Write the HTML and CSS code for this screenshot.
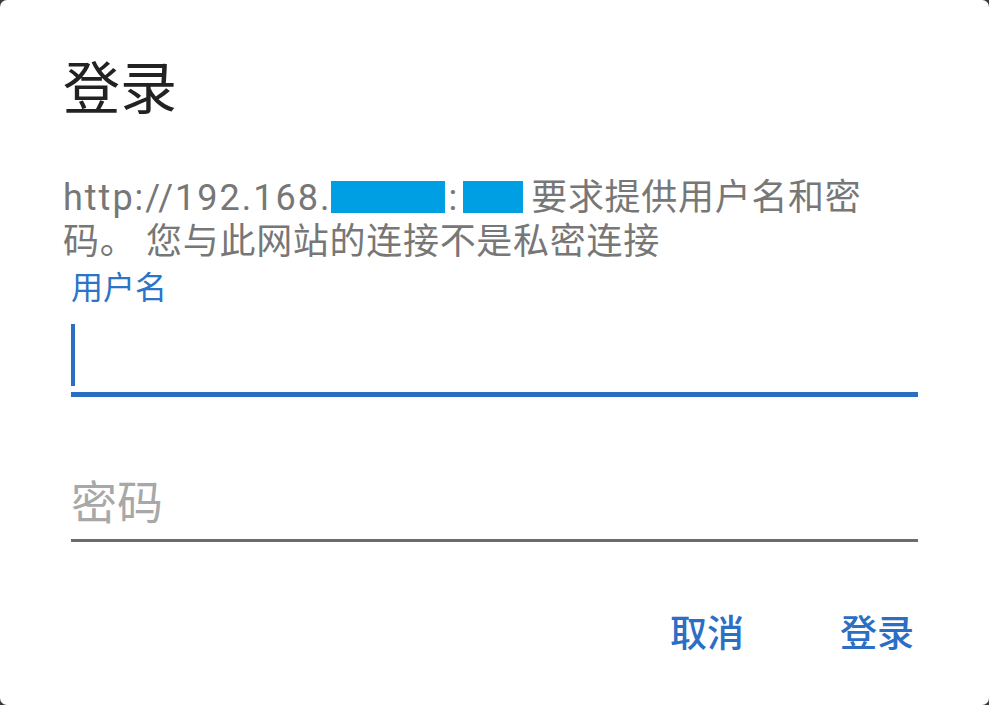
FILE: index.html
```html
<!DOCTYPE html>
<html lang="zh-CN">
<head>
<meta charset="utf-8">
<link rel="stylesheet" href="styles.css">
</head>
<body>
<div class="dialog">
  <h1 class="title">登录</h1>
  <p class="message"><span class="latin">http://192.168.</span><span class="redact redact-ip"></span><span class="latin colon">:</span><span class="redact redact-port"></span>要求提供用户名和密码。 您与此网站的连接不是私密连接</p>
  <div class="field field-active">
    <label class="field-label">用户名</label>
    <div class="field-input"><span class="caret"></span></div>
  </div>
  <div class="field field-idle">
    <div class="field-input"><span class="placeholder">密码</span></div>
  </div>
  <div class="actions">
    <button class="btn">取消</button>
    <button class="btn">登录</button>
  </div>
</div>
</body>
</html>
```
FILE: styles.css
```css
html, body {
  margin: 0;
  padding: 0;
  background: #3a3a3a;
}
body {
  width: 989px;
  height: 705px;
  overflow: hidden;
  font-family: Roboto, "Noto Sans CJK SC", sans-serif;
}
.dialog {
  box-sizing: border-box;
  width: 989px;
  height: 705px;
  background: #ffffff;
  border-radius: 7px;
  padding: 56px 71px 0 63px;
  display: flex;
  flex-direction: column;
}
.title {
  margin: 0;
  font-family: "Noto Sans CJK SC", sans-serif;
  font-weight: 400;
  font-size: 57px;
  line-height: 56px;
  color: #222222;
}
.message {
  margin: 64px 0 0 0;
  width: 830px;
  font-size: 36px;
  line-height: 44px;
  letter-spacing: 0.7px;
  color: #777777;
}
.latin {
  letter-spacing: 2px;
}
.colon {
  margin-left: 3px;
}
.redact {
  display: inline-block;
  background: #009fe4;
  height: 32px;
  vertical-align: -3px;
}
.redact-ip { width: 114px; }
.redact-port { width: 60px; margin-left: 4px; margin-right: 8px; }
.field {
  margin-left: 8px;
  display: flex;
  flex-direction: column;
}
.field-label {
  font-family: "Noto Sans CJK SC", sans-serif;
  font-size: 32px;
  line-height: 36px;
  color: #2b74c7;
  margin-top: 3px;
}
.field-input {
  height: 68px;
  display: flex;
  align-items: flex-end;
}
.field-active .field-input {
  border-bottom: 5px solid #2b6fc5;
  margin-top: 21px;
}
.caret {
  width: 4px;
  height: 62px;
  background: #2b6fc5;
  margin-bottom: 6px;
}
.field-idle .field-input {
  border-bottom: 3px solid #6b6b6b;
  margin-top: 74px;
}
.placeholder {
  font-family: "Noto Sans CJK SC", sans-serif;
  font-size: 46px;
  line-height: 56px;
  color: #a8a8a8;
  margin-bottom: 12px;
}
.actions {
  display: flex;
  justify-content: flex-end;
  gap: 96px;
  margin-top: 67px;
  padding-right: 4px;
}
.btn {
  border: none;
  background: none;
  padding: 0;
  font-family: "Noto Sans CJK SC", sans-serif;
  font-weight: 500;
  font-size: 37px;
  line-height: 44px;
  color: #2b6fc5;
}
```
